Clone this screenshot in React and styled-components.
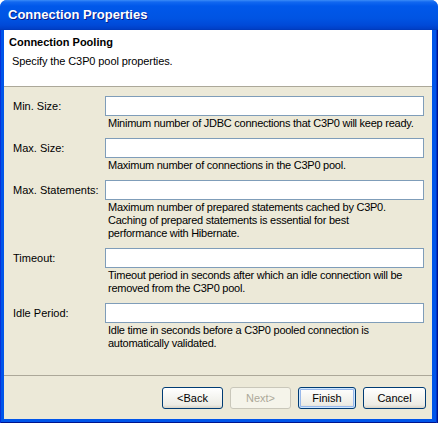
import React from 'react';
import styled, { createGlobalStyle } from 'styled-components';

const GlobalStyle = createGlobalStyle`
  html, body {
    margin: 0;
    padding: 0;
    background: #ffffff;
  }
  body {
    font-family: "Liberation Sans", Arial, sans-serif;
    font-size: 11px;
    color: #000;
  }
`;

const Window = styled.div`
  width: 438px;
  height: 423px;
  display: flex;
  flex-direction: column;
  border-radius: 7px 7px 0 0;
  overflow: hidden;
  background: #0055ea;
`;

const TitleBar = styled.div`
  height: 30px;
  flex: none;
  display: flex;
  align-items: center;
  padding-left: 8px;
  padding-bottom: 1px;
  box-sizing: border-box;
  background: linear-gradient(
    to bottom,
    #3b8cf7 0px,
    #1268f0 2px,
    #0058ea 6px,
    #0054e3 18px,
    #004ad8 25px,
    #003fc6 29px,
    #0037b4 30px
  );
  color: #fff;
  font-size: 13px;
  font-weight: bold;
  text-shadow: 1px 1px 0 #0a1c8a;
`;

const Frame = styled.div`
  flex: 1;
  display: flex;
  min-width: 0;
  padding: 0 6px 4px 4px;
  background: #0055ea;
  box-shadow:
    inset 1px 0 0 #0831d9,
    inset -1px 0 0 #00138c,
    inset -2px 0 0 #0035c8,
    inset 0 -1px 0 #00138c;
`;

const Client = styled.div`
  flex: 1;
  min-width: 0;
  display: flex;
  flex-direction: column;
  background: #ece9d8;
`;

const Header = styled.div`
  height: 57px;
  box-sizing: border-box;
  background: #fff;
  border-bottom: 1px solid #aca899;
  padding: 6px 0 0 5px;
`;

const HeaderTitle = styled.div`
  font-weight: bold;
  line-height: 13px;
`;

const HeaderText = styled.div`
  margin-top: 6px;
  padding-left: 3px;
  line-height: 13px;
  letter-spacing: -0.1px;
`;

const Body = styled.div`
  flex: 1;
  padding: 9px 8px 0 9px;
`;

const FieldRow = styled.div`
  display: grid;
  grid-template-columns: 92px minmax(0, 1fr);
  margin-bottom: 8px;
`;

const Label = styled.label`
  height: 20px;
  line-height: 20px;
  white-space: nowrap;
`;

const Input = styled.input`
  display: block;
  width: 100%;
  height: 20px;
  box-sizing: border-box;
  margin: 0;
  border: 1px solid #7f9db9;
  background: #fff;
  font: inherit;
  outline: none;
`;

const Help = styled.div`
  margin-top: 1px;
  padding-left: 3px;
  line-height: 13px;
  letter-spacing: -0.25px;
`;

const HelpLine = styled.div`
  white-space: nowrap;
`;

const Footer = styled.div`
  flex: none;
  display: flex;
  justify-content: flex-end;
  gap: 7px;
  border-top: 1px solid #aca899;
  padding: 11px 6px 10px 0;
`;

const Button = styled.button`
  width: ${(p) => p.$w}px;
  height: 22px;
  box-sizing: border-box;
  margin: 0;
  padding: 0;
  border-radius: 3px;
  font: inherit;
  color: #000;
  border: 1px solid #003c74;
  background: linear-gradient(to bottom, #ffffff 0%, #f5f5f1 45%, #ecebe4 85%, #d8d3c7 100%);
  box-shadow: ${(p) => (p.$default ? 'inset 0 0 0 1px #cee7ff, inset 0 0 0 2px #98b8ea' : 'none')};

  &:disabled {
    color: #aca899;
    border-color: #c9c7ba;
    background: #f5f4ea;
  }
`;

const fields = [
  { label: 'Min. Size:', help: ['Minimum number of JDBC connections that C3P0 will keep ready.'] },
  { label: 'Max. Size:', help: ['Maximum number of connections in the C3P0 pool.'] },
  {
    label: 'Max. Statements:',
    help: [
      'Maximum number of prepared statements cached by C3P0.',
      'Caching of prepared statements is essential for best',
      'performance with Hibernate.',
    ],
  },
  {
    label: 'Timeout:',
    help: [
      'Timeout period in seconds after which an idle connection will be',
      'removed from the C3P0 pool.',
    ],
  },
  {
    label: 'Idle Period:',
    help: ['Idle time in seconds before a C3P0 pooled connection is', 'automatically validated.'],
  },
];

const App = () => (
  <>
    <GlobalStyle />
    <Window>
      <TitleBar>Connection Properties</TitleBar>
      <Frame>
        <Client>
          <Header>
            <HeaderTitle>Connection Pooling</HeaderTitle>
            <HeaderText>Specify the C3P0 pool properties.</HeaderText>
          </Header>
          <Body>
            {fields.map((f) => (
              <FieldRow key={f.label}>
                <Label>{f.label}</Label>
                <div>
                  <Input type="text" />
                  <Help>
                    {f.help.map((line) => (
                      <HelpLine key={line}>{line}</HelpLine>
                    ))}
                  </Help>
                </div>
              </FieldRow>
            ))}
          </Body>
          <Footer>
            <Button $w={61}>&lt;Back</Button>
            <Button $w={61} disabled>
              Next&gt;
            </Button>
            <Button $w={58} $default>
              Finish
            </Button>
            <Button $w={63}>Cancel</Button>
          </Footer>
        </Client>
      </Frame>
    </Window>
  </>
);

export default App;
